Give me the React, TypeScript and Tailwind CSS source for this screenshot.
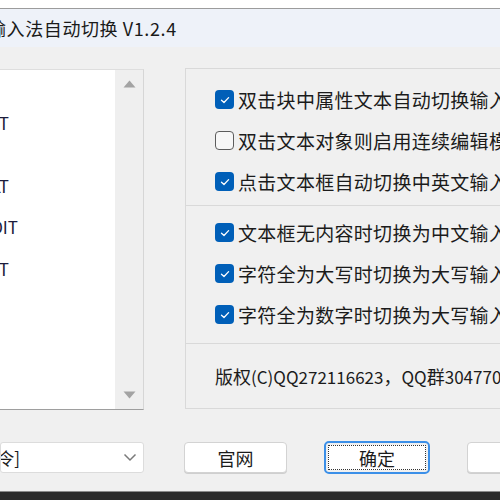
import React from "react";

const FONT = { fontFamily: '"Noto Sans CJK SC", "Noto Sans", sans-serif' };

function CheckBox({ checked }: { checked: boolean }) {
  if (checked) {
    return (
      <div className="w-[19px] h-[19px] rounded-[4px] bg-[#005fb8] flex items-center justify-center shrink-0">
        <svg width="12" height="12" viewBox="0 0 12 12">
          <path d="M2.5 6.2 L5 8.5 L9.6 3.6" fill="none" stroke="#ffffff" strokeWidth="1.3" strokeLinecap="round" strokeLinejoin="round" />
        </svg>
      </div>
    );
  }
  return <div className="w-[19px] h-[19px] rounded-[4px] border-[1.5px] border-[#5c5c5c] bg-[#f7f7f7] shrink-0" />;
}

function Row({ checked, text }: { checked: boolean; text: string }) {
  return (
    <div className="h-[41px] flex items-center gap-[4px] whitespace-nowrap">
      <CheckBox checked={checked} />
      <span className="text-[19px] leading-none text-[#1b1b1b] tracking-[0.3px]">{text}</span>
    </div>
  );
}

function ListItem({ end, text }: { end: number; text: string }) {
  return (
    <div className="h-[20.75px] flex items-center">
      <div className="flex justify-end whitespace-nowrap text-[17px] leading-none text-[#1c1c3c]" style={{ width: end }}>
        {text}
      </div>
    </div>
  );
}

export default function App() {
  return (
    <div className="w-[500px] h-[500px] overflow-hidden bg-[#f0f0f0] flex flex-col" style={FONT}>
      <div className="h-[8px] bg-white shrink-0" />
      <div className="h-px bg-[#9c9c9c] shrink-0" />
      <div className="h-[38px] bg-[#eef2f9] flex items-center shrink-0 whitespace-nowrap">
        <span className="ml-[-12px] text-[18px] leading-none text-[#1a1a1a] tracking-[0.6px]">输入法自动切换 V1.2.4</span>
      </div>
      <div className="flex-1 flex flex-col pt-[21px]">
        <div className="flex h-[342px] shrink-0">
          <div className="mt-px w-[144px] h-[341px] shrink-0 flex border-t border-t-[#dedede] border-b border-b-[#9e9e9e] border-r border-r-[#d6d6d6] bg-white">
            <div className="w-[115px] h-full pt-px overflow-hidden">
              <ListItem end={0} text="" />
              <ListItem end={0} text="" />
              <ListItem end={9} text="TEXT" />
              <ListItem end={0} text="" />
              <ListItem end={0} text="" />
              <ListItem end={9} text="MULT" />
              <ListItem end={0} text="" />
              <ListItem end={18} text="DDEDIT" />
              <ListItem end={0} text="" />
              <ListItem end={9} text="TEXT" />
            </div>
            <div className="flex-1 h-full bg-[#efefef] flex flex-col items-center justify-between pt-[10px] pb-[10px]">
              <svg width="13" height="8" viewBox="0 0 13 8">
                <path d="M6.5 0.5 L12.5 7.5 L0.5 7.5 Z" fill="#a3a3a3" />
              </svg>
              <svg width="13" height="8" viewBox="0 0 13 8">
                <path d="M0.5 0.5 L12.5 0.5 L6.5 7.5 Z" fill="#a3a3a3" />
              </svg>
            </div>
          </div>
          <div className="ml-[41px] w-[360px] shrink-0 flex flex-col h-[341px]">
            <div className="h-[138px] border border-[#d9d9d9] pt-[10px] pl-[29px]">
              <Row checked text="双击块中属性文本自动切换输入法" />
              <Row checked={false} text="双击文本对象则启用连续编辑模式" />
              <Row checked text="点击文本框自动切换中英文输入法" />
            </div>
            <div className="h-[138px] border-x border-b border-[#d9d9d9] pt-[6px] pl-[29px]">
              <Row checked text="文本框无内容时切换为中文输入法" />
              <Row checked text="字符全为大写时切换为大写输入法" />
              <Row checked text="字符全为数字时切换为大写输入法" />
            </div>
            <div className="flex-1 border-x border-b border-[#d9d9d9] pl-[29px] flex items-center whitespace-nowrap">
              <span className="text-[18px] leading-none text-[#1b1b1b]">
                版权<span className="text-[17px]">(C)QQ272116623</span>，<span className="text-[17px]">QQ</span>群<span className="text-[17px]">3047701234</span>
              </span>
            </div>
          </div>
        </div>
        <div className="flex mt-[32px] shrink-0">
          <div className="w-[144px] h-[31px] shrink-0 bg-white border border-[#dcdcdc] rounded-[3px] flex items-center justify-between pr-[6px] overflow-hidden">
            <div className="flex justify-end whitespace-nowrap text-[17px] leading-none text-[#1b1b1b]" style={{ width: 19 }}>
              [全部命令]
            </div>
            <svg width="14" height="9" viewBox="0 0 14 9">
              <path d="M1.5 1.5 L7 7 L12.5 1.5" fill="none" stroke="#7a7a7a" strokeWidth="1.5" />
            </svg>
          </div>
          <button className="ml-[40px] w-[103px] h-[31px] shrink-0 bg-white border border-[#d3d3d3] rounded-[4px] shadow-[0_1px_0_#cfcfcf] text-[18px] leading-none text-[#1b1b1b]">
            官网
          </button>
          <div className="ml-[37px] w-[106px] h-[33px] -mt-[1px] shrink-0 rounded-[5px] border-2 border-[#3b8fe8] p-[2px]">
            <div className="w-full h-full border border-dotted border-[#333] bg-white flex items-center justify-center text-[18px] leading-none text-[#1b1b1b]">
              确定
            </div>
          </div>
          <button className="ml-[37px] w-[103px] h-[31px] shrink-0 bg-white border border-[#d3d3d3] rounded-[4px] shadow-[0_1px_0_#cfcfcf] text-[18px] leading-none text-[#1b1b1b]">
            取消
          </button>
        </div>
        <div className="flex-1" />
      </div>
      <div className="h-px bg-[#8a8a8a] shrink-0" />
      <div className="h-[8px] bg-[#2b2b2b] shrink-0" />
    </div>
  );
}
